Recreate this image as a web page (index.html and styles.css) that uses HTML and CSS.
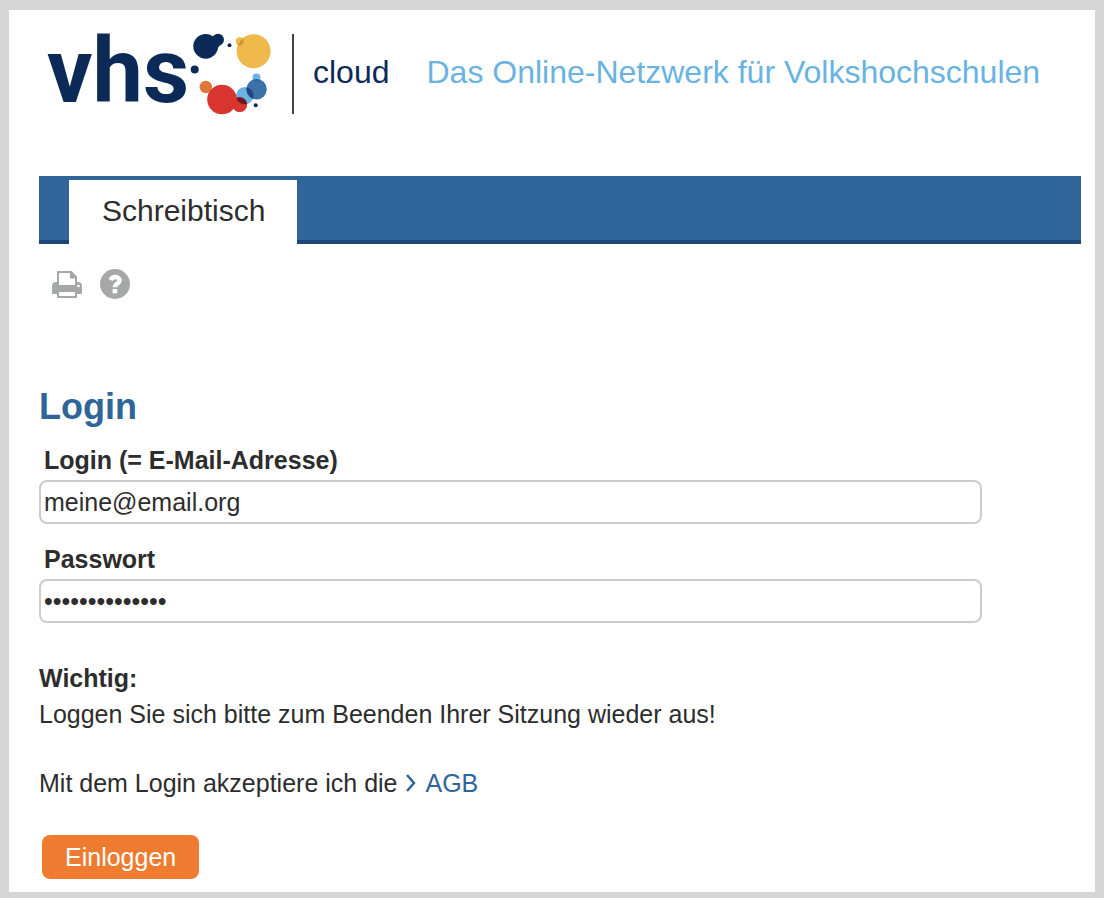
FILE: index.html
```html
<!DOCTYPE html>
<html lang="de">
<head>
<meta charset="utf-8">
<meta name="viewport" content="width=device-width, initial-scale=1">
<title>vhs cloud – Login</title>
<link rel="stylesheet" href="styles.css">
</head>
<body>
<div class="page">
  <header class="header">
    <div class="logo">
      <span class="logo-text">vhs</span>
      <svg class="logo-dots" viewBox="190 32 82 84" aria-hidden="true">
        <g fill="#0c2a58">
          <circle cx="205.7" cy="46.3" r="12.4"/>
          <circle cx="218" cy="39.8" r="6"/>
          <path d="M211 38l4-2 6 8-4 5z"/>
          <circle cx="229.5" cy="45.2" r="2"/>
          <circle cx="194.7" cy="69.5" r="4"/>
          <circle cx="255.7" cy="105.3" r="2"/>
        </g>
        <circle cx="239.9" cy="41.4" r="4.1" fill="#f0b94b"/>
        <circle cx="253.6" cy="51.2" r="17" fill="#f0b94b"/>
        <path d="M243.7 40.1a4.1 4.1 0 0 1-5.8 5A17 17 0 0 1 243.7 38z" fill="#d29436"/>
        <circle cx="205.8" cy="87" r="6.2" fill="#e07639"/>
        <circle cx="256.5" cy="77.5" r="4" fill="#69b3e2"/>
        <circle cx="244.8" cy="95.6" r="8.7" fill="#69b3e2"/>
        <circle cx="256.6" cy="89.2" r="10.2" fill="#3971a8"/>
        <clipPath id="sky"><circle cx="244.8" cy="95.6" r="8.7"/></clipPath>
        <circle cx="256.6" cy="89.2" r="10.2" fill="#23467b" clip-path="url(#sky)"/>
        <path d="M253 80.1a10 10 0 0 1 7 0q-3 3-7 0z" fill="#2c659f"/>
        <circle cx="222" cy="99.5" r="14.8" fill="#d83530"/>
        <circle cx="239.7" cy="104.7" r="7.4" fill="#d83530"/>
        <path d="M233 98l4 4-4 7z" fill="#d83530"/>
        <circle cx="239.7" cy="104.7" r="7.4" fill="#701423" clip-path="url(#sky)"/>
      </svg>
      <span class="logo-product">cloud</span>
    </div>
    <p class="tagline">Das Online-Netzwerk für Volkshochschulen</p>
  </header>

  <nav class="nav">
    <a class="tab" href="#">Schreibtisch</a>
  </nav>

  <div class="tools">
    <button class="tool" type="button" aria-label="Drucken">
      <svg class="icon" viewBox="0 0 30 30" fill="none" stroke="#a6a7a9" stroke-width="2" stroke-linejoin="round" aria-hidden="true">
        <path d="M6 17V3h13l5 5v9"/>
        <path d="M19 3l5 5.500h-5z" fill="#a6a7a9"/>
        <path d="M4 14h2v3h18v-3h2a3 3 0 0 1 3 3v7H1v-7a3 3 0 0 1 3-3z" fill="#a6a7a9"/>
        <path d="M6 22h18v6H6z" fill="#fff"/>
        <circle cx="26.500" cy="17" r="1.300" fill="#fff" stroke="none"/>
      </svg>
    </button>
    <button class="tool" type="button" aria-label="Hilfe">
      <svg class="icon" viewBox="0 0 30 30" aria-hidden="true">
        <circle cx="15" cy="15" r="15" fill="#a6a7a9"/>
        <path d="M10.500 11Q12 8 15 8c2.700 0 4.600 1.400 4.600 3.500 0 3.300-4.700 3-4.700 6.800" fill="none" stroke="#fff" stroke-width="4.500"/>
        <path d="M12.600 20h4.600v4.400h-4.600z" fill="#fff"/>
      </svg>
    </button>
  </div>

  <main class="content">
    <h1 class="title">Login</h1>
    <form class="form">
      <label class="label" for="login">Login (= E-Mail-Adresse)</label>
      <input class="field" id="login" type="text" value="meine@email.org">
      <label class="label" for="password">Passwort</label>
      <input class="field" id="password" type="password" value="geheim12345678">
      <p class="note"><strong>Wichtig:</strong><br>Loggen Sie sich bitte zum Beenden Ihrer Sitzung wieder aus!</p>
      <p class="terms">Mit dem Login akzeptiere ich die
        <a class="link" href="#"><svg class="chevron" viewBox="0 0 12 18" aria-hidden="true"><path d="M2 1l7 8-7 8" fill="none" stroke="#2f6599" stroke-width="2.500"/></svg>AGB</a></p>
      <button class="submit" type="submit">Einloggen</button>
    </form>
  </main>
</div>
</body>
</html>
```
FILE: styles.css
```css
* {
  box-sizing: border-box;
}

body {
  margin: 0;
  min-height: 100vh;
  padding: 10px 9px 6px;
  display: flex;
  background: #d6d6d6;
  color: #2d2d2d;
  font: 25px/36px "Liberation Sans", Arial, sans-serif;
}

.page {
  flex: 1;
  min-width: 0;
  padding: 24px 14px 12px 30px;
  background: #fff;
}

.header {
  display: flex;
  align-items: center;
  gap: 37px;
  padding-left: 8px;
  margin-bottom: 62px;
  font-size: 32px;
}

.logo {
  display: flex;
  align-items: center;
  height: 80px;
  color: #0c2a58;
}

.logo-text {
  width: 143px;
  padding-bottom: 4px;
  font: 700 90px/80px Roboto, sans-serif;
}

.logo-dots {
  width: 82px;
  height: 84px;
}

.logo-product {
  display: flex;
  align-items: center;
  height: 80px;
  margin-left: 20px;
  padding: 0 0 4px 19px;
  border-left: 2px solid #444;
}

.tagline {
  margin: 0;
  padding-bottom: 4px;
  color: #69b3e2;
}

.nav {
  display: flex;
  height: 68px;
  padding: 4px 30px 0;
  background: linear-gradient(to top, #1d4676 4px, #2f6599 4px);
}

.tab {
  display: flex;
  align-items: center;
  padding: 0 32px 2px 33px;
  background: #fff;
  color: #2d2d2d;
  font-size: 30px;
  text-decoration: none;
}

.tools {
  display: flex;
  gap: 18px;
  padding: 25px 13px 0;
}

.tool {
  padding: 0;
  border: 0;
  background: none;
}

.icon {
  display: block;
  width: 30px;
  height: 30px;
}

.title {
  margin: 88px 0 15px;
  color: #2f6599;
  font-size: 36px;
  line-height: 40px;
}

.form {
  display: flex;
  flex-direction: column;
  align-items: flex-start;
  padding-right: 99px;
}

.label {
  padding-left: 5px;
  margin-bottom: 2px;
  font-weight: bold;
}

.field {
  width: 100%;
  height: 44px;
  margin: 0 0 17px;
  padding: 0 3px;
  border: 2px solid #ccc;
  border-radius: 8px;
  background: #fff;
  color: inherit;
  font: inherit;
}

.note {
  margin: 20px 0 33px;
}

.terms {
  margin: 0 0 34px;
}

.link {
  color: #2f6599;
  text-decoration: none;
}

.chevron {
  width: 12px;
  height: 18px;
  margin: 0 8px 0 1px;
}

.submit {
  height: 44px;
  margin-left: 3px;
  padding: 0 23px;
  border: 0;
  border-radius: 8px;
  background: #ee7b30;
  color: #fff;
  font: inherit;
}
```
